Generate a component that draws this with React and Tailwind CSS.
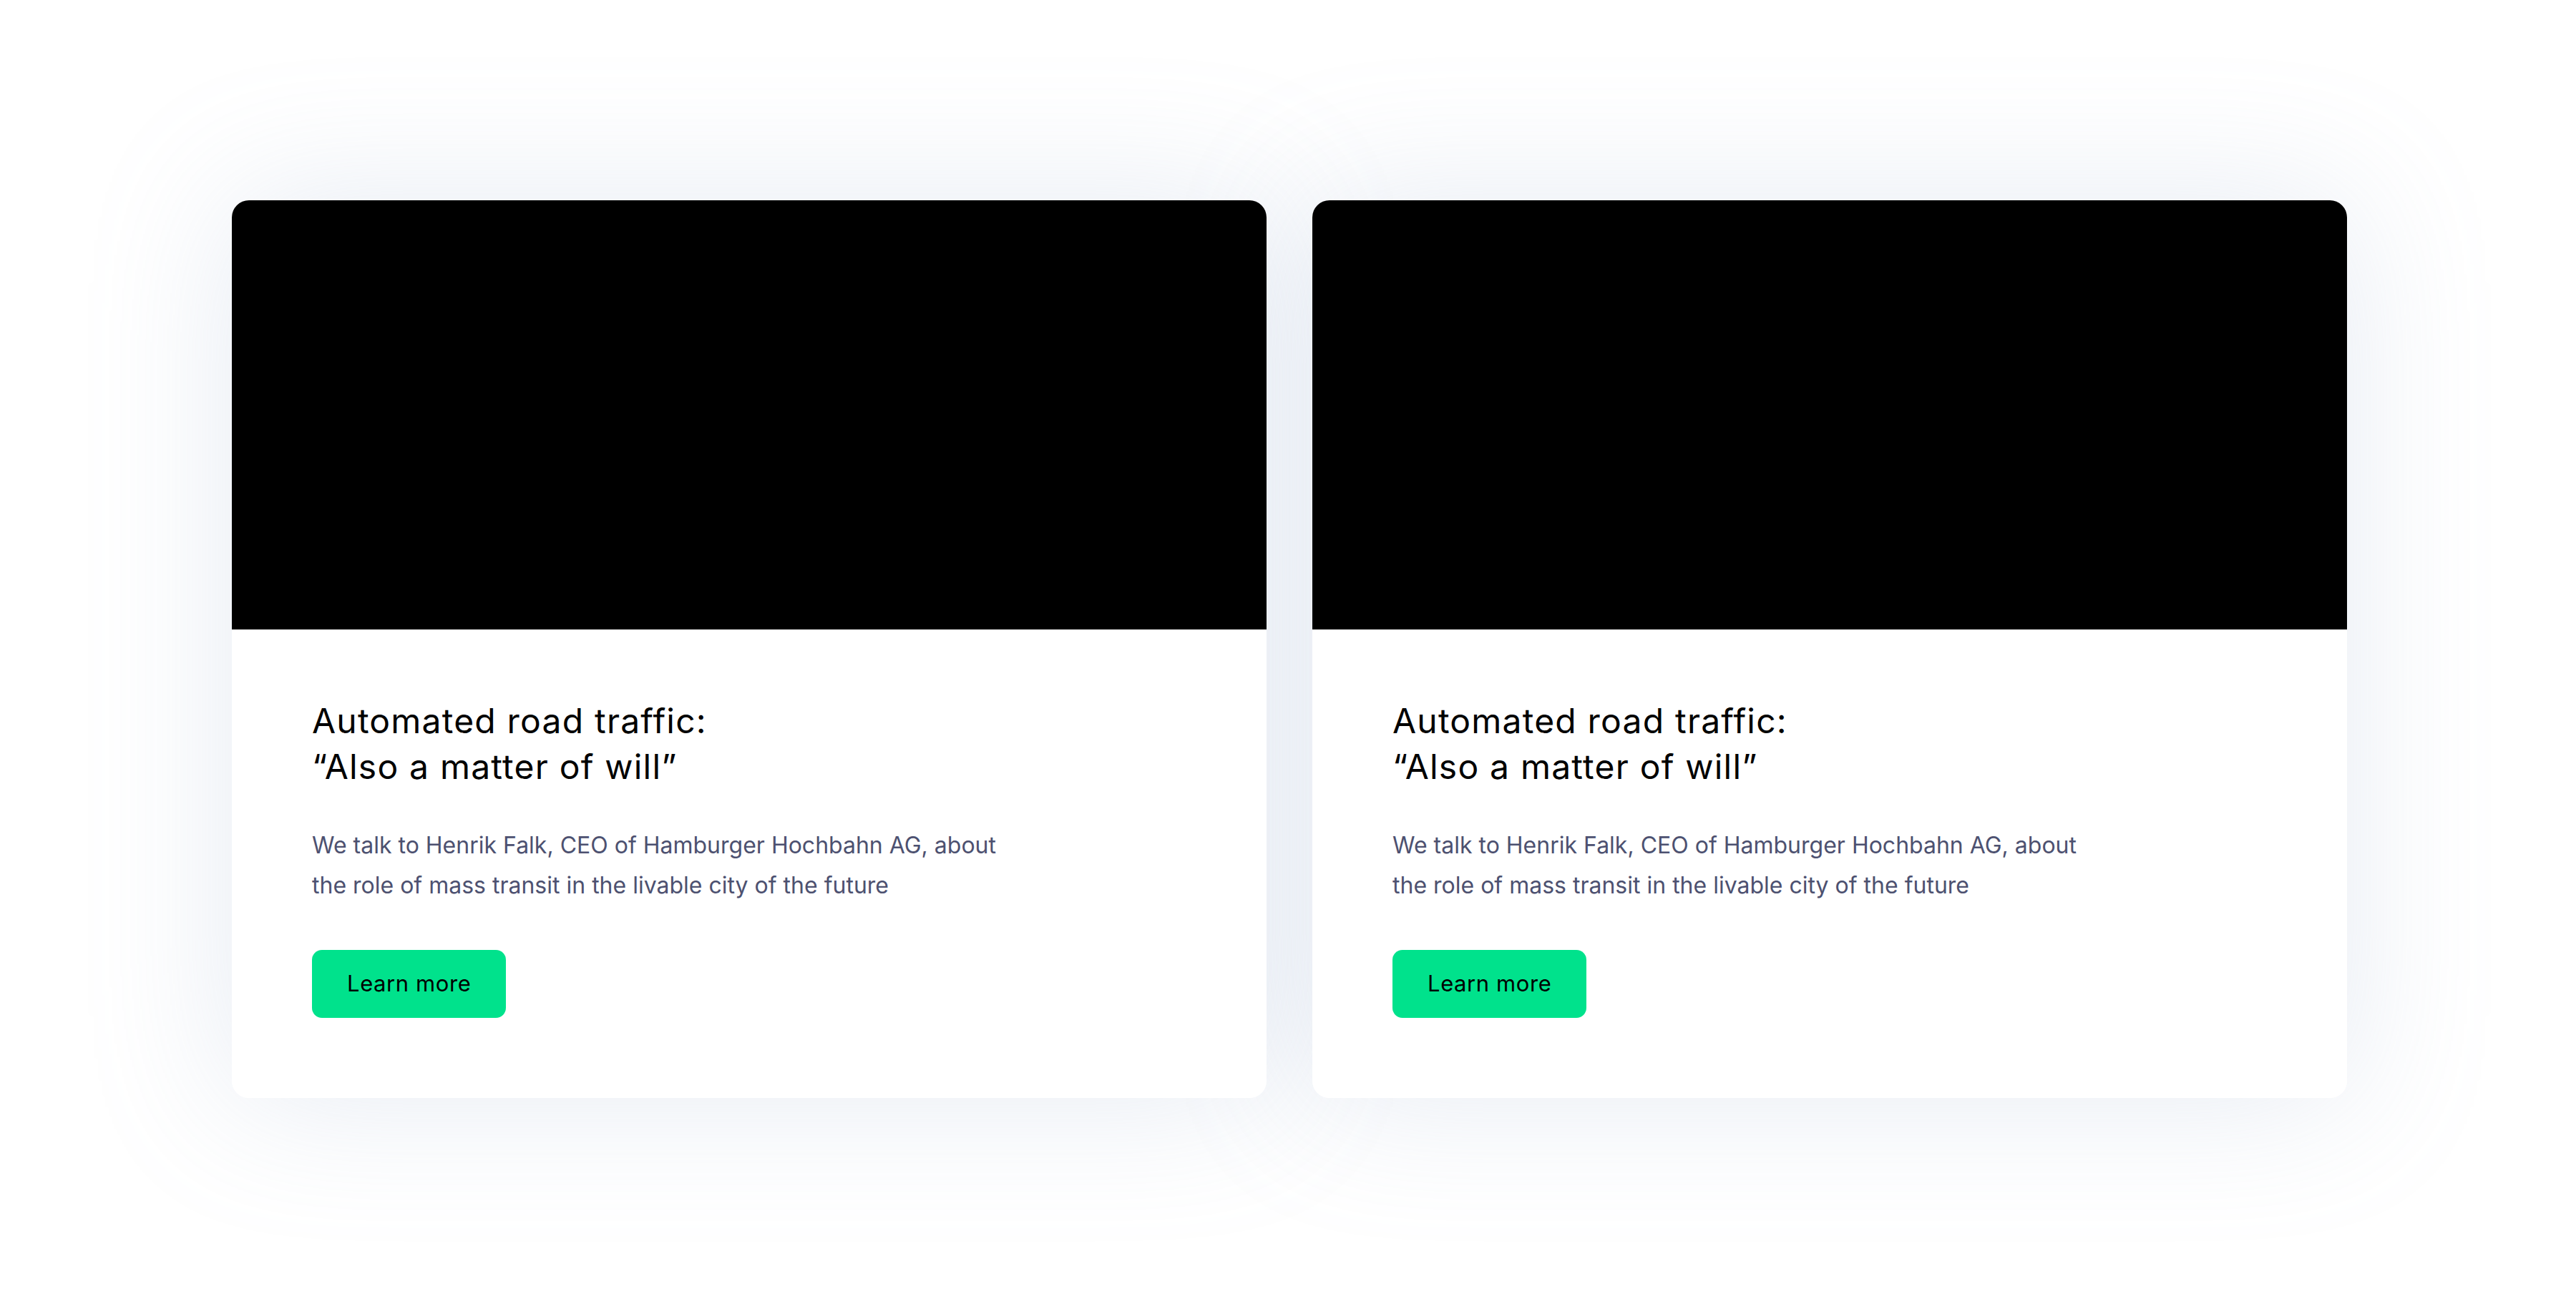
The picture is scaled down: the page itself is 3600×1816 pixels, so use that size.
import React from "react";

function Card() {
  return (
    <div className="relative w-[1446px]">
      <div className="absolute inset-0 -z-10 rounded-[24px] shadow-[0_0_200px_rgba(140,165,200,0.22)]" />
      <div className="rounded-[24px] overflow-hidden bg-white">
        <div className="h-[600px] bg-black" />
        <div className="pt-[96px] px-[112px] pb-[112px]">
          <h2 className="text-[48px] leading-[64px] text-black font-normal tracking-[1.2px] [font-family:Inter,'Noto_Sans',sans-serif]">
            Automated road traffic:
            <br />
            “Also a matter of will”
          </h2>
          <p className="mt-[50px] text-[32px] leading-[56px] text-[#4d5170] [font-family:Inter,'Noto_Sans',sans-serif]">
            We talk to Henrik Falk, CEO of Hamburger Hochbahn AG, about
            <br />
            the role of mass transit in the livable city of the future
          </p>
          <button className="mt-[62px] h-[95px] px-[49px] rounded-[14px] bg-[#00e28c] text-black text-[31px] tracking-[0.6px] [font-family:Inter,'Noto_Sans',sans-serif] flex items-center">
            Learn more
          </button>
        </div>
      </div>
    </div>
  );
}

export default function App() {
  return (
    <div className="isolate min-h-[1816px] w-[3600px] bg-white pt-[280px] pl-[324px] flex gap-[64px] items-start">
      <Card />
      <Card />
    </div>
  );
}
